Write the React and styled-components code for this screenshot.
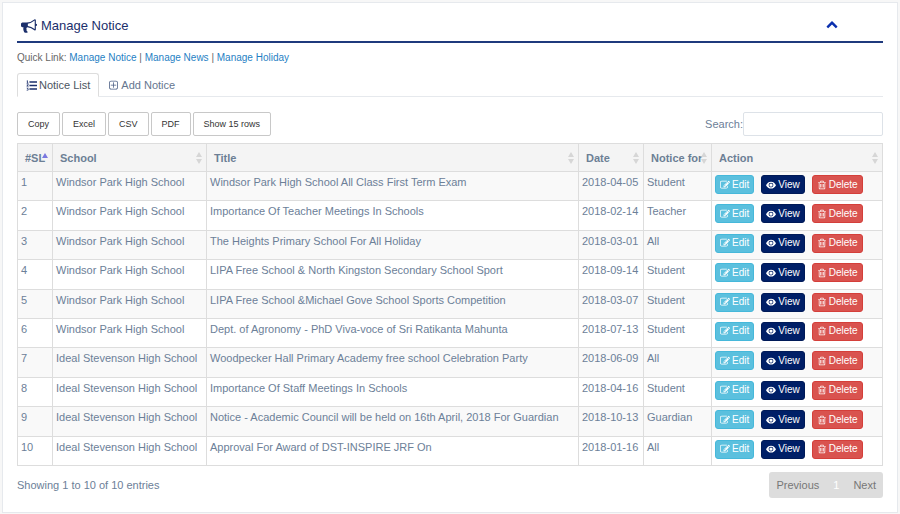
import React from "react";
import styled, { createGlobalStyle, css } from "styled-components";

const GlobalStyle = createGlobalStyle`
  * { box-sizing: border-box; }
  body {
    margin: 0;
    background: #f7f7f7;
    color: #6c8098;
    font-family: "Liberation Sans", Arial, sans-serif;
    font-size: 11px;
    line-height: 16px;
  }
  button, input { font: inherit; color: inherit; }
`;

const Panel = styled.main`
  margin: 2px 2px 1px;
  padding: 12px 14px 14px;
  background: #fff;
  border: 1px solid #e6e9ed;
`;

const PanelHeader = styled.header`
  display: flex;
  align-items: center;
  justify-content: space-between;
  height: 28px;
  padding: 0 43px 4px 4px;
  border-bottom: 2px solid #1f3a7d;
`;

const Heading = styled.h1`
  display: flex;
  align-items: center;
  gap: 4px;
  margin: 0;
  color: #1b2f6b;
  font-size: 13px;
  font-weight: 400;
`;

const CollapseButton = styled.button`
  display: flex;
  padding: 2px;
  border: 0;
  background: none;
  color: #0a2fae;
`;

const Glyph = styled.svg`
  flex: none;
  width: ${(p) => p.$size || 11}px;
  height: ${(p) => p.$size || 11}px;
  fill: currentColor;
  fill-rule: ${(p) => p.$rule || "nonzero"};
`;

const QuickLinks = styled.nav`
  margin-top: 7px;
  color: #666;
  font-size: 10px;
`;

const QuickLink = styled.a`
  color: #1f7fc4;
  text-decoration: none;
`;

const Tabs = styled.div`
  display: flex;
  margin-top: 7px;
  border-bottom: 1px solid #e6e9ed;
`;

const Tab = styled.button`
  display: flex;
  align-items: center;
  gap: 2px;
  height: 24px;
  margin-bottom: -1px;
  padding: 0 8px;
  border: 1px solid transparent;
  border-radius: 3px 3px 0 0;
  background: none;
  color: #65768f;
  ${(p) =>
    p.$active &&
    css`
      border-color: #ddd #ddd #fff;
      background: #fff;
      color: #4c5561;
    `}
  svg { color: ${(p) => (p.$active ? "#1b2f6b" : "#4b5f85")}; }
`;

const Toolbar = styled.div`
  display: flex;
  align-items: center;
  justify-content: space-between;
  margin: 15px 0 7px;
`;

const ExportGroup = styled.div`
  display: flex;
  gap: 2px;
`;

const ExportButton = styled.button`
  height: 24px;
  padding: 0 10px;
  border: 1px solid #c8c8c8;
  border-radius: 2px;
  background: #fff;
  color: #333;
  font-size: 9px;
`;

const SearchLabel = styled.label`
  display: flex;
  align-items: center;
`;

const SearchInput = styled.input`
  width: 140px;
  height: 24px;
  padding: 0 6px;
  border: 1px solid #dde2e8;
  border-radius: 2px;
  background: #fff;
`;

const Table = styled.table`
  width: 100%;
  height: 323px;
  border-collapse: collapse;
  table-layout: fixed;
`;

const Column = styled.col`
  width: ${(p) => (p.$width ? `${p.$width}px` : "auto")};
`;

const HeadCell = styled.th`
  height: 28px;
  padding: 0;
  border: 1px solid #ddd;
  background: #f4f4f4;
  color: #6c7f95;
  font-weight: 700;
  text-align: left;
`;

const SortButton = styled.button`
  display: flex;
  align-items: center;
  justify-content: space-between;
  width: 100%;
  padding: 0 4px 0 7px;
  border: 0;
  background: none;
  white-space: nowrap;
`;

const SortIcon = styled.svg`
  flex: none;
  width: 6px;
  height: 12px;
  margin-left: -4px;
  fill: ${(p) => (p.$active ? "#7a78e0" : "#d6d6d6")};
`;

const BodyRow = styled.tr`
  background: ${(p) => (p.$striped ? "#f9f9f9" : "#fff")};
`;

const Cell = styled.td`
  padding: 2px 3px;
  border: 1px solid #ddd;
  vertical-align: top;
  white-space: nowrap;
`;

const Actions = styled.div`
  display: flex;
  gap: 7px;
  padding-top: 1px;
`;

const tones = {
  edit: ["#5bc0de", "#46b8da"],
  view: ["#001f67", "#001a58"],
  remove: ["#d9534f", "#d43f3a"],
};

const ActionButton = styled.button`
  display: flex;
  align-items: center;
  gap: 2px;
  height: 19px;
  padding: 0 4px;
  border: 1px solid ${(p) => tones[p.$tone][1]};
  border-radius: 3px;
  background: ${(p) => tones[p.$tone][0]};
  color: #fff;
  font-size: 10px;
`;

const Footer = styled.footer`
  display: flex;
  align-items: center;
  justify-content: space-between;
  margin-top: 6px;
`;

const Pager = styled.nav`
  display: flex;
  border-radius: 3px;
  background: #ddd;
`;

const PageButton = styled.button`
  height: 26px;
  padding: 0 7px;
  border: 0;
  background: none;
  color: ${(p) => (p.$current ? "#fff" : "#777")};
`;

const paths = {
  bullhorn:
    "M1664 640q53 0 90.5 37.5t37.5 90.5-37.5 90.5-90.5 37.5v384q0 52-38 90t-90 38q-417-347-812-380-58 19-91 66t-31 100.5 40 92.5q-20 33-23 65.5t6 58 33.5 55 48 50 61.5 50.5q-29 58-111.5 83t-168.5 11.5-132-55.5q-7-23-29.5-87.5t-32-94.5-23-89-15-101 3.5-98.5 22-110.5h-122q-66 0-113-47t-47-113v-192q0-66 47-113t113-47h480q435 0 896-384 52 0 90 38t38 90v384zm-128 604v-954q-394 302-768 343v270q377 42 768 341z",
  edit: "M888 1184l116-116-152-152-116 116v56h96v96h56zm440-720q-16-16-33 1l-350 350q-17 17-1 33t33-1l350-350q17-17 1-33zm80 594v190q0 119-84.5 203.5t-203.5 84.5h-832q-119 0-203.5-84.5t-84.5-203.5v-832q0-119 84.5-203.5t203.5-84.5h832q63 0 117 25 15 7 18 23 3 17-9 29l-49 49q-14 14-32 8-23-6-45-6h-832q-66 0-113 47t-47 113v832q0 66 47 113t113 47h832q66 0 113-47t47-113v-126q0-13 9-22l64-64q15-15 35-7t20 29zm-96-738l288 288-672 672h-288v-288zm444 132l-92 92-288-288 92-92q28-28 68-28t68 28l152 152q28 28 28 68t-28 68z",
  view: "M0 930Q340 330 896 330T1792 930Q1452 1530 896 1530T0 930ZM896 480A430 430 0 0 0 896 1340A430 430 0 0 0 896 480ZM896 610A300 300 0 0 1 896 1210A300 300 0 0 1 896 610Z",
  remove:
    "M704 736v576q0 14-9 23t-23 9h-64q-14 0-23-9t-9-23v-576q0-14 9-23t23-9h64q14 0 23 9t9 23zm256 0v576q0 14-9 23t-23 9h-64q-14 0-23-9t-9-23v-576q0-14 9-23t23-9h64q14 0 23 9t9 23zm256 0v576q0 14-9 23t-23 9h-64q-14 0-23-9t-9-23v-576q0-14 9-23t23-9h64q14 0 23 9t9 23zm128 724v-948h-896v948q0 22 7 40.5t14.5 27 10.5 8.5h832q3 0 10.5-8.5t14.5-27 7-40.5zm-672-1076h448l-48-117q-7-9-17-11h-317q-10 2-17 11zm928 32v64q0 14-9 23t-23 9h-96v948q0 83-47 143.5t-113 60.5h-832q-66 0-113-58.5t-47-141.5v-952h-96q-14 0-23-9t-9-23v-64q0-14 9-23t23-9h309l70-167q15-37 54-63t79-26h320q40 0 79 26t54 63l70 167h309q14 0 23 9t9 23z",
  list: "M560 200h1232v240H560zM560 776h1232v240H560zM560 1352h1232v240H560zM200 64h120v400h100v90H90v-90h110V190l-90 50V120zM90 680q80-60 170-60 160 0 160 130 0 70-130 190h140v100H90v-90l160-150q50-50 40-90-20-60-140 30zM90 1250h330v90l-120 90q130 20 130 130 0 150-180 150-100 0-170-50l40-90q60 40 120 40 70 0 70-50 0-60-140-50v-70l110-90H90z",
  plus: "M1344 800v64q0 14-9 23t-23 9H960v352q0 14-9 23t-23 9h-64q-14 0-23-9t-9-23V896H480q-14 0-23-9t-9-23v-64q0-14 9-23t23-9h352V416q0-14 9-23t23-9h64q14 0 23 9t9 23v352h352q14 0 23 9t9 23zm128 448V416q0-66-47-113t-113-47H480q-66 0-113 47t-47 113v832q0 66 47 113t113 47h832q66 0 113-47t47-113zm128-832v832q0 119-84.5 203.5T1312 1536H480q-119 0-203.5-84.5T192 1248V416q0-119 84.5-203.5T480 128h832q119 0 203.5 84.5T1600 416z",
  up: "M1683 1031l-166 165q-19 19-45 19t-45-19L896 665l-531 531q-19 19-45 19t-45-19l-166-165q-19-19-19-45.5t19-45.5l742-741q19-19 45-19t45 19l742 741q19 19 19 45.5t-19 45.5z",
};

function Icon({ name, size }) {
  return (
    <Glyph
      $size={size}
      $rule={name === "view" ? "evenodd" : undefined}
      viewBox="0 0 1792 1792"
      aria-hidden="true"
    >
      <path d={paths[name]} />
    </Glyph>
  );
}

const columns = [
  { label: "#SL", width: 35, sorted: true },
  { label: "School", width: 154 },
  { label: "Title" },
  { label: "Date", width: 65 },
  { label: "Notice for", width: 68 },
  { label: "Action", width: 171 },
];

const windsor = "Windsor Park High School";
const ideal = "Ideal Stevenson High School";

const notices = [
  [windsor, "Windsor Park High School All Class First Term Exam", "2018-04-05", "Student"],
  [windsor, "Importance Of Teacher Meetings In Schools", "2018-02-14", "Teacher"],
  [windsor, "The Heights Primary School For All Holiday", "2018-03-01", "All"],
  [windsor, "LIPA Free School & North Kingston Secondary School Sport", "2018-09-14", "Student"],
  [windsor, "LIPA Free School &Michael Gove School Sports Competition", "2018-03-07", "Student"],
  [windsor, "Dept. of Agronomy - PhD Viva-voce of Sri Ratikanta Mahunta", "2018-07-13", "Student"],
  [ideal, "Woodpecker Hall Primary Academy free school Celebration Party", "2018-06-09", "All"],
  [ideal, "Importance Of Staff Meetings In Schools", "2018-04-16", "Student"],
  [ideal, "Notice - Academic Council will be held on 16th April, 2018 For Guardian", "2018-10-13", "Guardian"],
  [ideal, "Approval For Award of DST-INSPIRE JRF On", "2018-01-16", "All"],
];

const actions = [
  { tone: "edit", label: "Edit" },
  { tone: "view", label: "View" },
  { tone: "remove", label: "Delete" },
];

export default function App() {
  return (
    <>
      <GlobalStyle />
      <Panel>
        <PanelHeader>
          <Heading>
            <Icon name="bullhorn" size={16} />
            Manage Notice
          </Heading>
          <CollapseButton type="button" aria-label="Collapse panel">
            <Icon name="up" size={12} />
          </CollapseButton>
        </PanelHeader>
        <QuickLinks>
          Quick Link: <QuickLink href="#notice">Manage Notice</QuickLink> |{" "}
          <QuickLink href="#news">Manage News</QuickLink> |{" "}
          <QuickLink href="#holiday">Manage Holiday</QuickLink>
        </QuickLinks>
        <Tabs role="tablist">
          <Tab type="button" role="tab" aria-selected="true" $active>
            <Icon name="list" />
            Notice List
          </Tab>
          <Tab type="button" role="tab" aria-selected="false">
            <Icon name="plus" />
            Add Notice
          </Tab>
        </Tabs>
        <Toolbar>
          <ExportGroup>
            {["Copy", "Excel", "CSV", "PDF", "Show 15 rows"].map((label) => (
              <ExportButton type="button" key={label}>
                {label}
              </ExportButton>
            ))}
          </ExportGroup>
          <SearchLabel>
            Search:
            <SearchInput type="search" />
          </SearchLabel>
        </Toolbar>
        <Table>
          <colgroup>
            {columns.map((c) => (
              <Column key={c.label} $width={c.width} />
            ))}
          </colgroup>
          <thead>
            <tr>
              {columns.map((c) => (
                <HeadCell key={c.label} aria-sort={c.sorted ? "ascending" : undefined}>
                  <SortButton type="button">
                    {c.label}
                    <SortIcon $active={c.sorted} viewBox="0 0 6 12" aria-hidden="true">
                      <path d={c.sorted ? "M0 6L3 1L6 6Z" : "M0 5L3 0L6 5ZM0 7L3 12L6 7Z"} />
                    </SortIcon>
                  </SortButton>
                </HeadCell>
              ))}
            </tr>
          </thead>
          <tbody>
            {notices.map((values, i) => (
              <BodyRow key={values[1]} $striped={i % 2 === 0}>
                <Cell>{i + 1}</Cell>
                {values.map((value) => (
                  <Cell key={value}>{value}</Cell>
                ))}
                <Cell>
                  <Actions>
                    {actions.map((a) => (
                      <ActionButton type="button" key={a.tone} $tone={a.tone}>
                        <Icon name={a.tone} size={10} />
                        {a.label}
                      </ActionButton>
                    ))}
                  </Actions>
                </Cell>
              </BodyRow>
            ))}
          </tbody>
        </Table>
        <Footer>
          <span>Showing 1 to 10 of 10 entries</span>
          <Pager aria-label="Pages">
            <PageButton type="button">Previous</PageButton>
            <PageButton type="button" aria-current="page" $current>
              1
            </PageButton>
            <PageButton type="button">Next</PageButton>
          </Pager>
        </Footer>
      </Panel>
    </>
  );
}
